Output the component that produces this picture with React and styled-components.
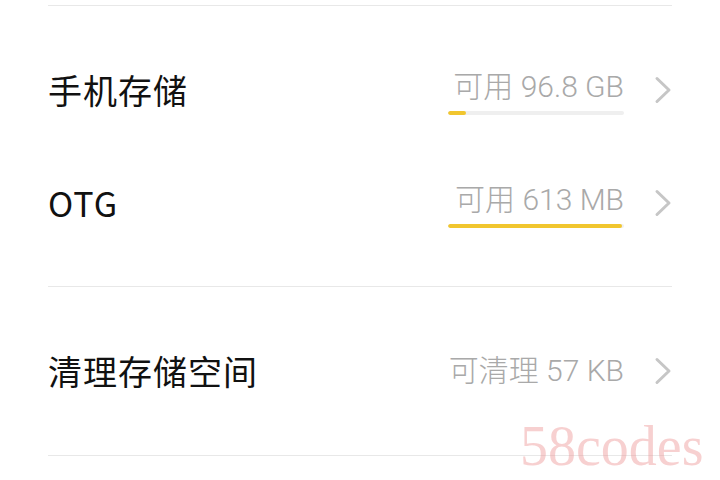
import React from 'react';
import styled, { createGlobalStyle } from 'styled-components';

const GlobalStyle = createGlobalStyle`
  html, body {
    margin: 0;
    padding: 0;
    background: #ffffff;
  }
  body {
    font-family: Roboto, "Noto Sans CJK SC", sans-serif;
  }
`;

const Page = styled.div`
  position: relative;
  width: 720px;
  height: 480px;
  overflow: hidden;
  padding-top: 5px;
  box-sizing: border-box;
`;

const Divider = styled.hr`
  margin: 0 48px;
  border: none;
  border-top: 1px solid #e8e8e8;
`;

const Section = styled.div`
  display: flex;
  flex-direction: column;
  padding: ${props => props.$top}px 0 ${props => props.$bottom}px;
`;

const Row = styled.div`
  display: flex;
  align-items: center;
  height: 113px;
  padding: 0 48px;
`;

const Title = styled.div`
  flex: 1;
  font-size: 34px;
  color: #111111;
  font-family: "Noto Sans CJK SC", sans-serif;
  letter-spacing: 1px;
`;

const Value = styled.div`
  display: flex;
  flex-direction: column;
  align-items: flex-end;
  width: 176px;
`;

const ValueText = styled.div`
  font-size: 30px;
  line-height: 32px;
  color: #a9a9a9;
  font-family: Roboto, "Noto Sans CJK SC", sans-serif;
  font-weight: 300;
  white-space: nowrap;
`;

const Track = styled.div`
  width: 176px;
  height: 4px;
  margin-top: 8px;
  border-radius: 2px;
  background: #efefef;
  overflow: hidden;
`;

const Fill = styled.div`
  height: 100%;
  background: #f1c62e;
  border-radius: 2px;
`;

const Chevron = styled.svg`
  margin-left: 30px;
  width: 18px;
  height: 28px;
`;

const Watermark = styled.div`
  position: absolute;
  left: 520px;
  top: 414px;
  font-family: "Liberation Serif", serif;
  font-size: 56px;
  color: rgba(238, 150, 150, 0.45);
`;

const Arrow = () => (
  <Chevron viewBox="0 0 18 28">
    <path d="M3 2.5 L15 14 L3 25.5" fill="none" stroke="#c6c6c6" strokeWidth="3" strokeLinecap="round" strokeLinejoin="round" />
  </Chevron>
);

const StorageRow = ({ title, value, percent, shift }) => (
  <Row>
    <Title>{title}</Title>
    <Value style={{ marginTop: shift }}>
      <ValueText>{value}</ValueText>
      {percent !== undefined && (
        <Track>
          <Fill style={{ width: `${percent}%` }} />
        </Track>
      )}
    </Value>
    <Arrow />
  </Row>
);

export default function App() {
  return (
    <Page>
      <GlobalStyle />
      <Divider />
      <Section $top={27} $bottom={27}>
        <StorageRow title="手机存储" value="可用 96.8 GB" percent={10} shift={6} />
        <StorageRow title="OTG" value="可用 613 MB" percent={99} shift={6} />
      </Section>
      <Divider />
      <Section $top={27} $bottom={28}>
        <StorageRow title="清理存储空间" value="可清理 57 KB" />
      </Section>
      <Divider />
      <Watermark>58codes</Watermark>
    </Page>
  );
}
